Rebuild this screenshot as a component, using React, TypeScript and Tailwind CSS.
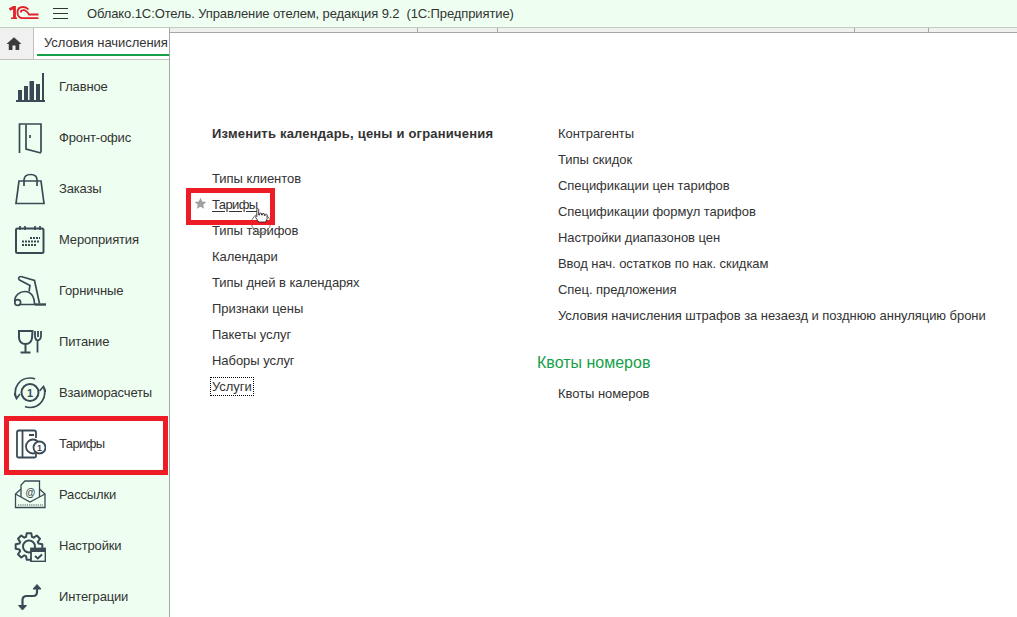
import type { ReactNode } from "react";

const Logo = () => (
  <svg width="30" height="14" viewBox="0 0 30 14" fill="none" stroke="#e2202a" className="mb-px ml-[9px] shrink-0">
    <path d="M0.500 3.500L5.500 1V12.500" strokeWidth="2.800" />
    <path d="M2 12.200H8" strokeWidth="1.600" />
    <path d="M19.500 3.500C18 1.700 16 1 14 1C10.500 1 8.500 3.200 8.500 6.500C8.500 10 10.500 12.200 14 12.200H29.500" strokeWidth="1.800" />
    <path d="M11.800 6.500C11.800 5 13 4.200 14.500 4.200C17 4.200 18.500 6 20 8.500H29.500" strokeWidth="1.800" />
  </svg>
);

const Ic = ({ children }: { children: ReactNode }) => (
  <svg width="32" height="32" viewBox="-1 -1 32 32" fill="none" stroke="#3a4a55" strokeWidth="1.700" className="shrink-0">
    {children}
  </svg>
);

// 8-tooth gear outline for the settings icon
const gearPath = Array.from({ length: 8 }, (_, i) => {
  const a = (i * Math.PI) / 4;
  const pt = (r: number, d: number) =>
    `${(14 + r * Math.cos(a + d)).toFixed(2)} ${(15.500 + r * Math.sin(a + d)).toFixed(2)}`;
  return `${i === 0 ? "M" : "L"}${pt(10, -0.3)}L${pt(13.500, -0.17)}L${pt(13.500, 0.17)}L${pt(10, 0.3)}`;
}).join("") + "Z";

const navItems: { title: string; icon: ReactNode }[] = [
  {
    title: "Главное",
    icon: (
      <g fill="#3a4a55" stroke="none">
        <rect x="3" y="18" width="4" height="10" />
        <rect x="9" y="14" width="4" height="14" />
        <rect x="14.500" y="9" width="4.500" height="19" />
        <rect x="21" y="12" width="4" height="16" />
        <rect x="27" y="1" width="2" height="27" />
        <rect x="1" y="28" width="29" height="2" />
      </g>
    ),
  },
  {
    title: "Фронт-офис",
    icon: (
      <>
        <path d="M4.500 30V1H26V29.500" />
        <path d="M11 1.500V26L26 30" />
        <path d="M15 12V15" />
      </>
    ),
  },
  {
    title: "Заказы",
    icon: (
      <>
        <path d="M4 7L1 29.500H29L26 7Z" />
        <path d="M9 12V6C9 2.500 11.500 0.500 15.500 0.500C19.500 0.500 22 2.500 22 6V12" />
      </>
    ),
  },
  {
    title: "Мероприятия",
    icon: (
      <>
        <rect x="1" y="3.500" width="27.500" height="24.500" rx="1.500" strokeWidth="2" />
        <path d="M5 1V5M10 1V5M20 1V5M25 1V5" />
        <path d="M15 13H25M7 16.500H25M7 20H22" strokeWidth="2.200" strokeDasharray="2 1" />
      </>
    ),
  },
  {
    title: "Горничные",
    icon: (
      <>
        <path d="M6 0.500L19.500 4.500L24.500 27.500" />
        <path d="M6 0.500C3.500 0.500 3 3 4.500 4L15 9.500L14 15.500" />
        <path d="M-0.500 26C-0.500 19 5 15.500 10 15.500C15.500 15.500 19.500 20 19.500 28.500H5" />
        <circle cx="2.700" cy="26.500" r="2.900" />
        <path d="M20 28.500H31" strokeWidth="2.400" />
      </>
    ),
  },
  {
    title: "Питание",
    icon: (
      <>
        <path d="M4 4H17.500L17 11C16.500 15 14 17 10.500 17C7 17 4.500 15 4 11Z" strokeWidth="2" />
        <path d="M10.500 17V25M5.500 25.500H15.500" strokeWidth="2" />
        <path d="M20 4V9C20 12 21 13 22.500 13.500V25.500M26 4V9C26 12 25 13 22.500 13.500M23 4V10" strokeWidth="1.800" />
      </>
    ),
  },
  {
    title: "Взаиморасчеты",
    icon: (
      <>
        <circle cx="15" cy="14.500" r="8.500" strokeWidth="2" />
        <text x="15" y="18.500" textAnchor="middle" fontSize="11" fontWeight="700" fill="#3a4a55" stroke="none" fontFamily="'Liberation Sans', sans-serif">1</text>
        <path d="M1 19C-2 9 5 0 15 0C17 0 19 0.400 20 1" />
        <path d="M29 10C32 20 25 29.500 15 29.500C13 29.500 11 29 10 28.500" />
        <path d="M-1 15L1.500 20.500L5 16M31 14L28.500 8.500L24.500 13" />
      </>
    ),
  },
  {
    title: "Тарифы",
    icon: (
      <>
        <path d="M21 9V3C21 2 20.500 1.500 19 1.500H4C2.500 1.500 2 2 2 3.500V27C2 28 2.500 28.500 4 28.500H19C20.500 28.500 21 28 21 27V25" strokeWidth="1.800" />
        <path d="M7.500 1.500V28.500M14 6H19" strokeWidth="1.800" />
        <circle cx="18" cy="17.500" r="7" strokeWidth="1.800" />
        <circle cx="24.500" cy="18.500" r="6" fill="#ffffff" strokeWidth="1.800" />
        <text x="24.500" y="22" textAnchor="middle" fontSize="9" fontWeight="700" fill="#3a4a55" stroke="none" fontFamily="'Liberation Sans', sans-serif">1</text>
      </>
    ),
  },
  {
    title: "Рассылки",
    icon: (
      <>
        <path d="M6 9L0.500 14V27.500H30V14L24.500 9" strokeWidth="1.300" />
        <path d="M6 17V5L10 1H24.500V17" strokeWidth="1.300" />
        <path d="M0.500 14L15 22L30 14" strokeWidth="1.300" />
        <path d="M3 25H28" strokeWidth="1" strokeDasharray="1.200 1" />
        <text x="15.300" y="15.500" textAnchor="middle" fontSize="10" fontWeight="700" fill="#3a4a55" stroke="none" fontFamily="'Liberation Sans', sans-serif">@</text>
      </>
    ),
  },
  {
    title: "Настройки",
    icon: (
      <>
        <path d={gearPath} strokeWidth="2" strokeLinejoin="round" />
        <circle cx="14" cy="15.500" r="6" strokeWidth="2" />
        <rect x="16" y="17.500" width="14.500" height="13" fill="#eefff1" strokeWidth="1.800" />
        <path d="M16 19.500H30.500" strokeWidth="3" />
        <path d="M20 25L22.800 27.500L27 23.500" strokeWidth="2" />
      </>
    ),
  },
  {
    title: "Интеграции",
    icon: (
      <>
        <path d="M7.500 24V18C7.500 15 9 14 12 14H18C21 14 22 13 22 10V5" strokeWidth="2.200" />
        <path d="M18 7L22 2.500L26 7Z" fill="#3a4a55" strokeWidth="1" />
        <path d="M3.500 23.500L7.500 28L11.500 23.500Z" fill="#3a4a55" strokeWidth="1" />
      </>
    ),
  },
];

const leftLinks = ["Типы клиентов", "Тарифы", "Типы тарифов", "Календари", "Типы дней в календарях", "Признаки цены", "Пакеты услуг", "Наборы услуг", "Услуги"];

const rightLinks = [
  "Контрагенты",
  "Типы скидок",
  "Спецификации цен тарифов",
  "Спецификации формул тарифов",
  "Настройки диапазонов цен",
  "Ввод нач. остатков по нак. скидкам",
  "Спец. предложения",
  "Условия начисления штрафов за незаезд и позднюю аннуляцию брони",
];

const Row = ({ children }: { children: ReactNode }) => (
  <div className="h-[26px] leading-[26px] whitespace-nowrap tracking-[-0.05px]">{children}</div>
);

export default function App() {
  return (
    <div className="flex h-[617px] w-[1017px] flex-col overflow-hidden bg-white font-['Liberation_Sans',Arial,sans-serif] text-[13px] text-[#333333]">
      {/* Header */}
      <header className="flex h-[28px] shrink-0 items-center border-b border-[#c2ccc4] bg-[#eefff1]">
        <Logo />
        <div className="ml-[14px] flex w-[15px] flex-col gap-[4px]">
          <span className="h-px bg-[#333333]" />
          <span className="h-px bg-[#333333]" />
          <span className="h-px bg-[#333333]" />
        </div>
        <div className="ml-[19px] whitespace-pre tracking-[-0.105px]">Облако.1С:Отель. Управление отелем, редакция 9.2  (1С:Предприятие)</div>
      </header>

      <div className="flex min-h-0 flex-1">
        <div className="flex w-[170px] shrink-0 flex-col border-r border-[#a6a6a6] bg-[#eefff1]">
          {/* Tabs */}
          <div className="flex h-[32px] shrink-0 border-b border-[#c2c2c2] bg-white">
            <div className="flex w-[34px] items-center border-r border-[#c2c2c2] bg-[#f0f0f0] pl-[5px]">
              <svg width="18" height="18" viewBox="0 0 24 24" fill="#3b3b3b">
                <path d="M10 20v-6h4v6h5v-8h3L12 3 2 12h3v8z" />
              </svg>
            </div>
            <div className="flex-1 pl-[3px]">
              <div className="h-[28px] border-b-2 border-[#16a04a] pl-[7px] pt-[2px] leading-[26px] whitespace-nowrap tracking-[-0.05px]">
                Условия начисления
              </div>
            </div>
          </div>

          {/* Sections */}
          <nav className="flex flex-col pt-px">
            {navItems.map((item) => (
              <div
                key={item.title}
                className={`relative flex h-[51px] shrink-0 items-center pl-[14px] ${item.title === "Тарифы" ? "bg-white" : ""}`}
              >
                <Ic>{item.icon}</Ic>
                <span className={`ml-[13px] ${item.title === "Тарифы" ? "tracking-[-0.6px]" : "tracking-[-0.15px]"}`}>{item.title}</span>
                {item.title === "Тарифы" && (
                  <span className="absolute left-[4px] top-[-2px] h-[59px] w-[164px] border-[5px] border-[#ee1c25]" />
                )}
              </div>
            ))}
          </nav>
        </div>

        <div className="flex min-w-0 flex-1 flex-col">
          <div className="flex h-[5px] shrink-0 border-b border-[#a6a6a6] bg-[#f0f0f0]">
            <span className="ml-[247px] w-px bg-[#a6a6a6]" />
            <span className="ml-[79px] w-px bg-[#a6a6a6]" />
            <span className="ml-[356px] w-px bg-[#a6a6a6]" />
            <span className="ml-[73px] w-px bg-[#a6a6a6]" />
          </div>

          <main className="flex flex-1 pl-[42px] pt-[88px]">
            <div className="w-[325px] shrink-0">
              <Row>
                <span className="font-bold tracking-[0.2px]">Изменить календарь, цены и ограничения</span>
              </Row>
              <div className="mt-[19px]">
                {leftLinks.map((link) => (
                  <Row key={link}>
                    {link === "Тарифы" ? (
                      <div className="relative">
                        <svg width="13" height="13" viewBox="0 0 24 24" fill="#a0a0a0" className="absolute left-[-18px] top-[5px]">
                          <path d="M12 1.500l3.200 7 7.600.8-5.700 5.100 1.600 7.500L12 18.100l-6.700 3.800 1.600-7.500L1.200 9.300l7.600-.8z" />
                        </svg>
                        <span className="underline underline-offset-2 tracking-[-0.6px]">{link}</span>
                        <span className="absolute left-[39px] top-[21px] h-[20px] w-[20px] rounded-full border border-[#777777]" />
                        <span className="absolute left-[-26px] top-[-4px] h-[37px] w-[89px] border-[5px] border-[#ee1c25]" />
                        <svg width="13" height="15" viewBox="0 0 14 16" className="absolute left-[43px] top-[16px]" fill="#ffffff" stroke="#222222" strokeWidth="0.9">
                          <path d="M2 1.500C2 .5 4 .5 4 1.500V7.500H5V6C5 5.200 7 5.200 7 6V7.500H8V6.500C8 5.700 10 5.700 10 6.500V8H11V7.200C11 6.500 13 6.500 13 7.200V11.500L11.500 15H4L.7 10C.2 9 1.500 8.300 2 9.200V1.500Z" />
                        </svg>
                      </div>
                    ) : link === "Услуги" ? (
                      <span className="outline-1 outline-offset-[1px] outline-dotted outline-black">{link}</span>
                    ) : (
                      link
                    )}
                  </Row>
                ))}
              </div>
            </div>

            <div>
              <div className="pl-[21px]">
                {rightLinks.map((link) => (
                  <Row key={link}>{link}</Row>
                ))}
              </div>
              <div className="mt-[21px] h-[26px] text-[16px] leading-[26px] text-[#16a04a]">Квоты номеров</div>
              <div className="mt-[5px] pl-[21px]">
                <Row>Квоты номеров</Row>
              </div>
            </div>
          </main>
        </div>
      </div>
    </div>
  );
}
